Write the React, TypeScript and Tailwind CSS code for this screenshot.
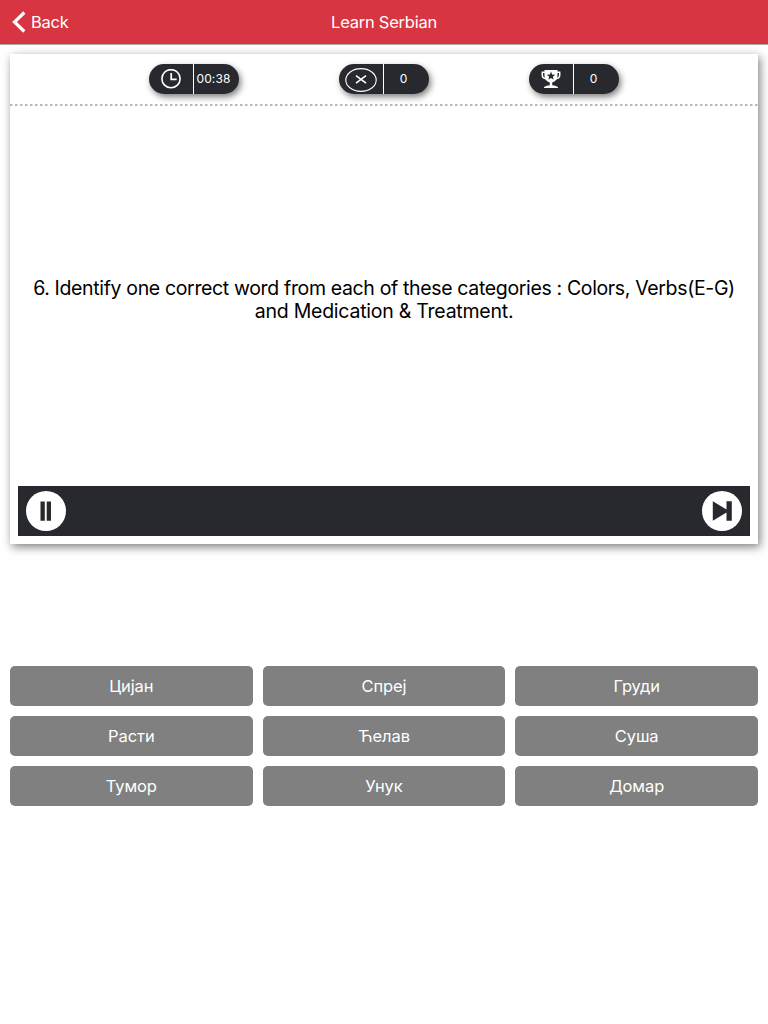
import React from "react";

const answers = ["Цијан", "Спреј", "Груди", "Расти", "Ћелав", "Суша", "Тумор", "Унук", "Домар"];

function ClockIcon() {
  return (
    <svg width="20" height="20" viewBox="0 0 20 20" fill="none" stroke="white">
      <circle cx="10" cy="9.700" r="9.1" strokeWidth="1.6" />
      <path d="M10.200 4v6.300h5.500" strokeWidth="1.700" />
    </svg>
  );
}

function WrongIcon() {
  return (
    <svg className="mt-0.5" width="32" height="24" viewBox="0 0 32 24" fill="none" stroke="white">
      <ellipse cx="16" cy="12" rx="15.2" ry="11.4" strokeWidth="1.1" />
      <path d="M11 7.600l10 7.600M21 7.600l-10 7.600" strokeWidth="1.500" />
    </svg>
  );
}

function TrophyIcon() {
  return (
    <svg width="20" height="20" viewBox="0 0 20 20">
      <path d="M5 3.200H1.300v3c0 2.300 1.500 3.300 4 3.600M15 3.200h3.700v3c0 2.300-1.500 3.300-4 3.600" fill="none" stroke="white" strokeWidth="1.500" />
      <path fill="white" d="M3.500 1h13v6c0 3.200-2 5.400-5.300 6.600v2.600c2 .2 4.500.8 5.800 1.800v1h-14v-1c1.300-1 3.800-1.600 5.800-1.800v-2.600C5.500 12.400 3.500 10.200 3.500 7z" />
      <path fill="#28292f" d="M10 2.600l1.100 2.900 3.100.2-2.400 2 .8 3L10 9.100l-2.600 1.600.8-3-2.400-2 3.100-.2z" />
    </svg>
  );
}

function Stat({ icon, value }: { icon: React.ReactNode; value: string }) {
  return (
    <div className="flex h-[30px] w-[90px] rounded-full bg-[#28292f] text-white shadow-[2px_3px_6px_rgba(0,0,0,0.5)]">
      <div className="flex w-11 items-center justify-center">{icon}</div>
      <div className="w-px bg-white" />
      <div className="flex flex-1 items-center justify-center pr-1.5 text-[12px] leading-[30px] tracking-[0.15px]">{value}</div>
    </div>
  );
}

export default function App() {
  return (
    <div className="flex h-[1024px] w-[768px] flex-col bg-white font-['Inter',sans-serif]">
      <header className="grid h-11 shrink-0 grid-cols-3 items-center bg-[#d73541] text-[16.500px] tracking-[-0.24px] text-white shadow-[0_1px_0_#a8a8a8]">
        <button className="flex items-center gap-[5px] pl-3 text-left">
          <svg width="14" height="22" viewBox="0 0 14 22" fill="none">
            <path d="M12.300 1.500L2.500 11l9.800 9.500" stroke="white" strokeWidth="3.200" />
          </svg>
          <span>Back</span>
        </button>
        <h1 className="text-center">Learn Serbian</h1>
      </header>

      <main className="mx-2.5 mt-2.5 flex h-[490px] shrink-0 flex-col bg-white shadow-[2px_3px_9px_rgba(0,0,0,0.5)]">
        <div className="flex h-[50px] shrink-0 justify-center gap-[100px] pt-2.5">
          <Stat icon={<ClockIcon />} value="00:38" />
          <Stat icon={<WrongIcon />} value="0" />
          <Stat icon={<TrophyIcon />} value="0" />
        </div>
        <svg className="block shrink-0" width="748" height="2">
          <path d="M0 1H748" stroke="#b8b8b8" strokeWidth="2" strokeDasharray="2.500 2.500" />
        </svg>
        <p className="flex flex-1 items-center justify-center pt-[7px] text-center text-[19.500px] leading-[23px] tracking-[-0.24px] text-black">
          <span className="whitespace-nowrap">
            <span className="tracking-[-0.35px]">
              6. Identify one correct word from each of these categories : Colors, Verbs(E-G)
            </span>
            <br />
            and Medication &amp; Treatment.
          </span>
        </p>
        <div className="mx-2 mb-2 flex h-[50px] shrink-0 items-center justify-between bg-[#28292f] px-2">
          <button className="size-10 rounded-full bg-white">
            <svg width="40" height="40" viewBox="0 0 40 40" fill="#28292f">
              <path d="M14.500 10.500h4.300v19.300h-4.300zM20.700 10.500H25v19.300h-4.300z" />
            </svg>
          </button>
          <button className="size-10 rounded-full bg-white">
            <svg width="40" height="40" viewBox="0 0 40 40" fill="#28292f">
              <path d="M10.800 10.300L24.500 18.500v-8.200h5.300v19.400h-5.300v-8.200l-13.700 8.200z" />
            </svg>
          </button>
        </div>
      </main>

      <section className="mx-2.5 mt-[122px] grid grid-cols-3 gap-2.5">
        {answers.map((word) => (
          <button key={word} className="h-10 rounded-[5px] bg-[#808080] text-[16.500px] tracking-[-0.1px] text-white">
            {word}
          </button>
        ))}
      </section>
    </div>
  );
}
